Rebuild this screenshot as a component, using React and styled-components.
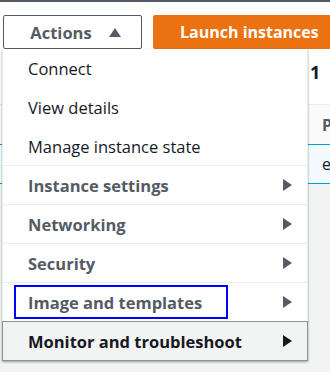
import React from 'react';
import styled, { createGlobalStyle } from 'styled-components';

const GlobalStyle = createGlobalStyle`
  html, body {
    margin: 0;
    padding: 0;
    background: #f2f3f3;
  }
  body {
    font-family: "Open Sans", "Noto Sans", Arial, sans-serif;
  }
`;

const menuItems = [
  { label: 'Connect' },
  { label: 'View details' },
  { label: 'Manage instance state', last: true },
  { label: 'Instance settings', sub: true },
  { label: 'Networking', sub: true },
  { label: 'Security', sub: true },
  { label: 'Image and templates', sub: true, focused: true },
  { label: 'Monitor and troubleshoot', sub: true, hovered: true },
];

const Caret = ({ up, color }) => (
  <svg width={up ? 12 : 9} height={up ? 9 : 12} viewBox={up ? '0 0 12 9' : '0 0 9 12'}>
    {up ? (
      <polygon points="6,0 12,9 0,9" fill={color} />
    ) : (
      <polygon points="0,0 9,6 0,12" fill={color} />
    )}
  </svg>
);

const App = () => {
  return (
    <>
      <GlobalStyle />
      <Page>
        <Toolbar>
          <ActionsButton>
            Actions
            <Caret up color="#545b64" />
          </ActionsButton>
          <PrimaryButton>Launch instances</PrimaryButton>
        </Toolbar>
        <Content>
          <TitleRow>
            <Count>1</Count>
          </TitleRow>
          <TableRow>
            <Cell />
            <HeadCell>Public IPv4 DNS</HeadCell>
          </TableRow>
          <TableRow selected>
            <Cell />
            <Cell>ec2-3-91-22-4.compute-1.amazonaws.com</Cell>
          </TableRow>

          <Menu>
            {menuItems.map((item) => (
              <MenuItem
                key={item.label}
                hovered={item.hovered}
                divider={item.sub || item.last}
              >
                <Label sub={item.sub} hovered={item.hovered} focused={item.focused}>
                  {item.label}
                </Label>
                {item.sub && (
                  <ArrowSlot>
                    <Caret color={item.hovered ? '#16191f' : '#545b64'} />
                  </ArrowSlot>
                )}
              </MenuItem>
            ))}
          </Menu>
        </Content>
      </Page>
    </>
  );
};

const Page = styled.div`
  width: 330px;
  height: 372px;
  overflow: hidden;
  background: #f2f3f3;
  border-top: 2px solid #545b64;
  box-sizing: border-box;
`;

const Toolbar = styled.div`
  display: flex;
  gap: 11px;
  padding: 13px 0 0 3px;
  background: #ffffff;
  white-space: nowrap;
`;

const ActionsButton = styled.button`
  display: flex;
  align-items: center;
  justify-content: center;
  gap: 17px;
  width: 139px;
  height: 34px;
  flex-shrink: 0;
  padding: 0 0 0 6px;
  background: #ffffff;
  border: 1px solid #545b64;
  border-radius: 2px;
  color: #545b64;
  font-family: inherit;
  font-size: 16.5px;
  font-weight: 700;
`;

const PrimaryButton = styled.button`
  height: 34px;
  flex-shrink: 0;
  padding: 0 26px;
  background: #ec7211;
  border: 1px solid #ec7211;
  border-radius: 2px;
  color: #ffffff;
  font-family: inherit;
  font-size: 16px;
  font-weight: 700;
`;

const Content = styled.div`
  position: relative;
`;

const TitleRow = styled.div`
  height: 56px;
  box-sizing: border-box;
  padding: 0 0 10px 310px;
  display: flex;
  align-items: center;
  background: #ffffff;
  border-bottom: 1px solid #eaeded;
`;

const Count = styled.span`
  font-size: 18px;
  font-weight: 700;
  color: #16191f;
`;

const TableRow = styled.div`
  display: grid;
  grid-template-columns: 322px 1fr;
  height: ${(p) => (p.selected ? '38px' : '39px')};
  align-items: center;
  background: ${(p) => (p.selected ? '#f1faff' : '#fafafa')};
  border-bottom: 1px solid #00a1c9;
  font-size: 16px;
  color: #16191f;
  white-space: nowrap;
  overflow: hidden;
`;

const Cell = styled.div`
  overflow: hidden;
`;

const HeadCell = styled.div`
  overflow: hidden;
  color: #545b64;
  font-weight: 700;
`;

const Menu = styled.ul`
  position: absolute;
  top: 0;
  left: 2px;
  width: 306px;
  margin: 0;
  padding: 0;
  list-style: none;
  background: #ffffff;
  border: 1px solid #eaeded;
  border-top: none;
  box-sizing: border-box;
  box-shadow: 0 1px 2px 0 rgba(0, 28, 36, 0.4);
`;

const MenuItem = styled.li`
  display: flex;
  align-items: center;
  justify-content: space-between;
  height: 38px;
  padding: 0 15px 0 11px;
  border-bottom: 1px solid ${(p) => (p.divider ? '#eaeded' : 'transparent')};
  ${(p) =>
    p.hovered &&
    `
    background: #f2f3f3;
    border: 1px solid #879596;
    margin: -1px -1px -1px;
  `}
`;

const Label = styled.span`
  display: flex;
  align-items: center;
  height: 34px;
  padding: 0 12px;
  border: 2px solid ${(p) => (p.focused ? '#0000ff' : 'transparent')};
  min-width: ${(p) => (p.focused ? '214px' : '0')};
  box-sizing: border-box;
  font-size: 16.5px;
  font-weight: ${(p) => (p.sub ? 700 : 400)};
  color: ${(p) => (p.sub && !p.hovered ? '#545b64' : '#16191f')};
  white-space: nowrap;
`;

const ArrowSlot = styled.span`
  display: flex;
  align-items: center;
`;

export default App;
